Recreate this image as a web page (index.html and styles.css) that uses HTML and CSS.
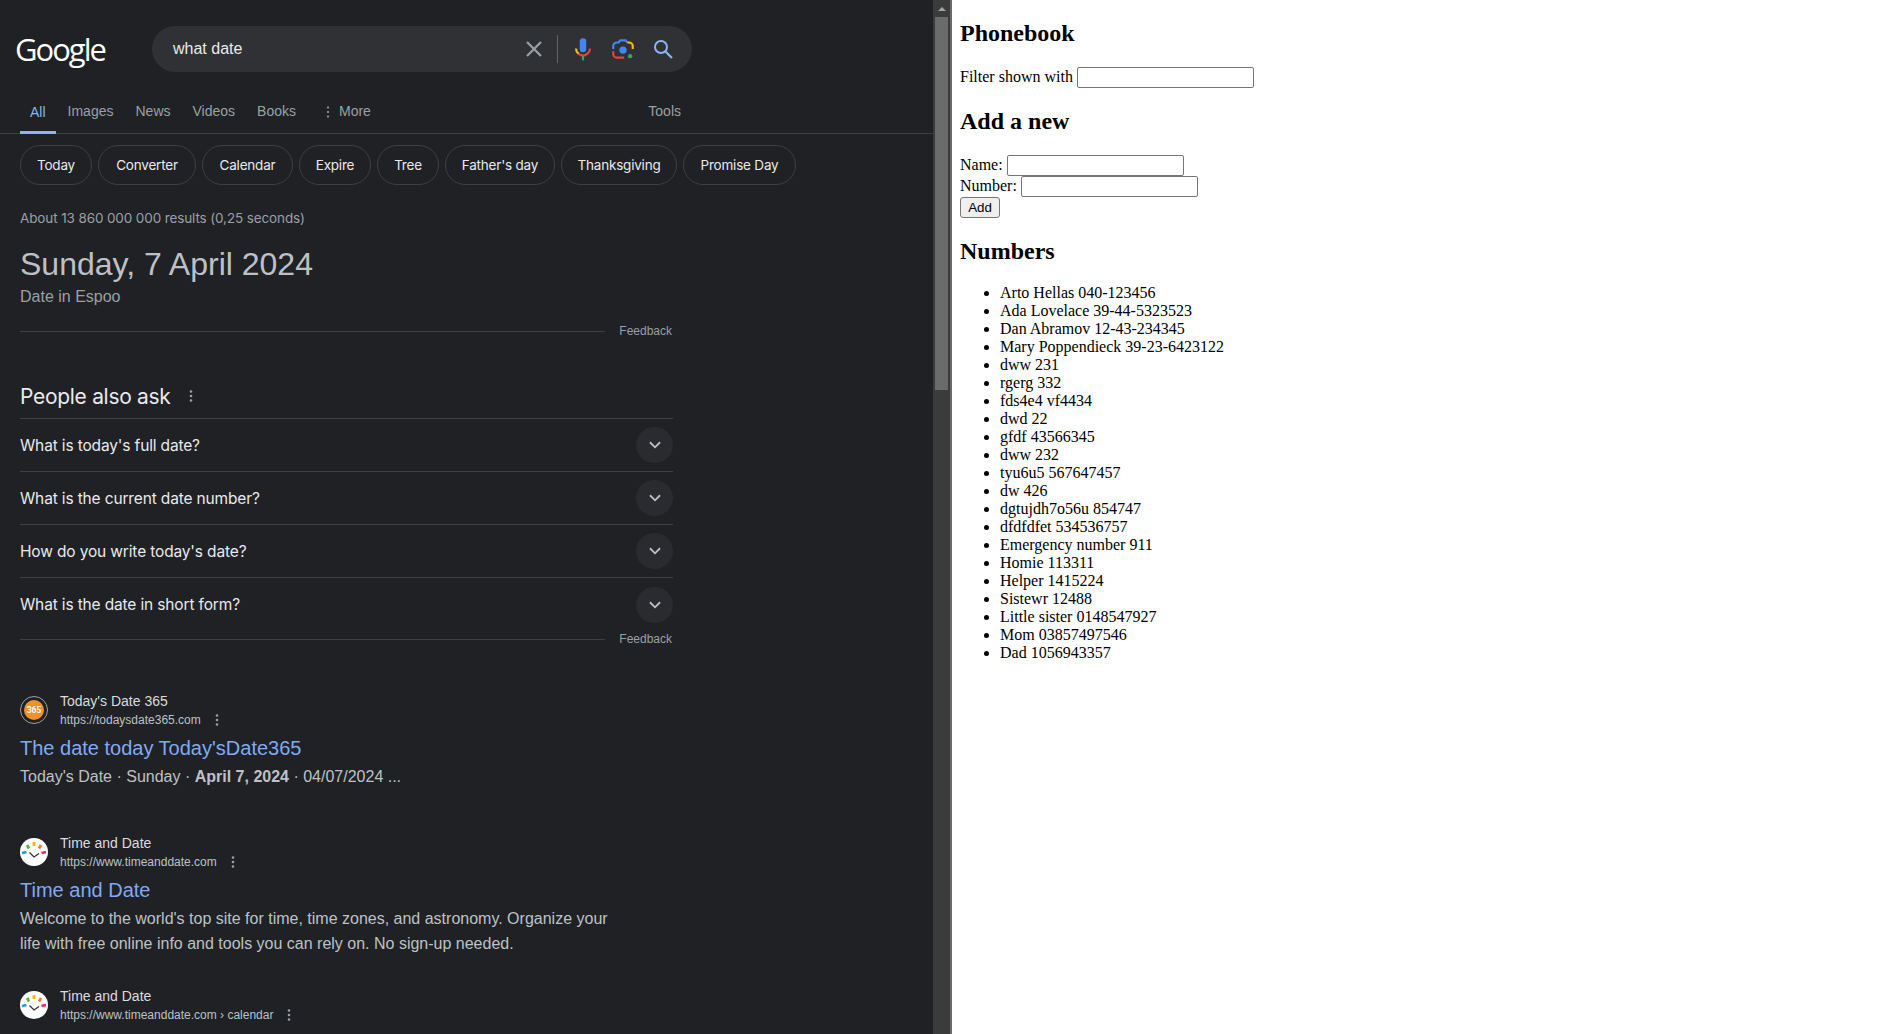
FILE: index.html
```html
<!DOCTYPE html>
<html lang="en">
<head>
<meta charset="utf-8">
<title>what date</title>
<link rel="stylesheet" href="styles.css">
</head>
<body>
<main class="left">
  <div class="serp">
    <header class="top">
      <div class="logo">Google</div>
      <div class="search">
        <span class="query">what date</span>
        <svg class="ic-x" viewBox="0 0 24 24"><path d="M5 5l14 14M19 5L5 19" stroke="#9aa0a6" stroke-width="2.2" fill="none"/></svg>
        <span class="sep"></span>
        <svg class="ic-mic" viewBox="0 0 24 24"><rect x="9" y="2" width="6" height="13" rx="3" fill="#4285f4"/><path d="M5.5 11.5a6.5 6.5 0 0 0 2.5 5" stroke="#fbbc04" stroke-width="2" fill="none"/><path d="M8 16.5a6.5 6.5 0 0 0 8 0 6.5 6.5 0 0 0 2.5-5" stroke="#ea4335" stroke-width="2" fill="none"/><rect x="11" y="18.5" width="2" height="4" fill="#34a853"/></svg>
        <svg class="ic-lens" viewBox="0 0 24 24"><circle cx="12" cy="13" r="3.4" fill="#4285f4"/><circle cx="18.6" cy="18.6" r="2" fill="#34a853"/><path d="M3 12V9.5A3.5 3.5 0 0 1 6.500 6H8l1.500-2h5L16 6" stroke="#4285f4" stroke-width="2" fill="none"/><path d="M16 6h1.500A3.500 3.500 0 0 1 21 9.500V12" stroke="#fbbc04" stroke-width="2" fill="none"/><path d="M3 14v2.500A3.500 3.500 0 0 0 6.500 20H13" stroke="#ea4335" stroke-width="2" fill="none"/></svg>
        <svg class="ic-search" viewBox="0 0 24 24"><circle cx="10" cy="10" r="6" stroke="#8ab4f8" stroke-width="2" fill="none"/><path d="M14.500 14.500L21 21" stroke="#8ab4f8" stroke-width="2.200" fill="none"/></svg>
      </div>
    </header>
    <nav class="tabs">
      <a class="tab active">All</a>
      <a class="tab">Images</a>
      <a class="tab">News</a>
      <a class="tab">Videos</a>
      <a class="tab">Books</a>
      <a class="tab more"><svg class="dots-sm" viewBox="0 0 4 14"><circle cx="2" cy="2.500" r="1.100"/><circle cx="2" cy="7" r="1.100"/><circle cx="2" cy="11.500" r="1.100"/></svg>More</a>
      <a class="tab tools">Tools</a>
    </nav>
    <div class="chips">
      <a class="chip w72">Today</a>
      <a class="chip w98">Converter</a>
      <a class="chip w91">Calendar</a>
      <a class="chip w72">Expire</a>
      <a class="chip w62">Tree</a>
      <a class="chip w110">Father's day</a>
      <a class="chip w116">Thanksgiving</a>
      <a class="chip w113">Promise Day</a>
    </div>
    <p class="stats">About 13 860 000 000 results (0,25 seconds)</p>
    <h1 class="answer">Sunday, 7 April 2024</h1>
    <p class="answer-sub">Date in Espoo</p>
    <div class="feedback first"><span class="rule"></span><span class="fb-text">Feedback</span></div>
    <div class="paa-head"><h2>People also ask</h2><svg class="dots" viewBox="0 0 4 14"><circle cx="2" cy="2.500" r="1.300"/><circle cx="2" cy="7" r="1.300"/><circle cx="2" cy="11.500" r="1.300"/></svg></div>
    <ul class="paa">
      <li><span>What is today's full date?</span><i class="chev"><svg viewBox="0 0 24 24"><path d="M6.500 9l5.500 5.500L17.500 9" stroke="#bdc1c6" stroke-width="2" fill="none"/></svg></i></li>
      <li><span>What is the current date number?</span><i class="chev"><svg viewBox="0 0 24 24"><path d="M6.500 9l5.500 5.500L17.500 9" stroke="#bdc1c6" stroke-width="2" fill="none"/></svg></i></li>
      <li><span>How do you write today's date?</span><i class="chev"><svg viewBox="0 0 24 24"><path d="M6.500 9l5.500 5.500L17.500 9" stroke="#bdc1c6" stroke-width="2" fill="none"/></svg></i></li>
      <li><span>What is the date in short form?</span><i class="chev"><svg viewBox="0 0 24 24"><path d="M6.500 9l5.500 5.500L17.500 9" stroke="#bdc1c6" stroke-width="2" fill="none"/></svg></i></li>
    </ul>
    <div class="feedback second"><span class="rule"></span><span class="fb-text">Feedback</span></div>

    <article class="result r1">
      <div class="site">
        <svg class="fav" viewBox="0 0 28 28"><circle cx="14" cy="14" r="13.500" fill="#202124" stroke="#9aa0a6"/><circle cx="14" cy="14" r="10" fill="#f0912c"/><text x="14" y="17" text-anchor="middle" class="fav-text">365</text></svg>
        <div class="site-text">
          <div class="site-name">Today's Date 365</div>
          <div class="site-url"><span>https://todaysdate365.com</span><svg class="dots-url" viewBox="0 0 4 14"><circle cx="2" cy="2.500" r="1.300"/><circle cx="2" cy="7" r="1.300"/><circle cx="2" cy="11.500" r="1.300"/></svg></div>
        </div>
      </div>
      <a class="title">The date today Today'sDate365</a>
      <p class="snippet">Today's Date · Sunday · <b>April 7, 2024</b> · 04/07/2024 ...</p>
    </article>

    <article class="result r2">
      <div class="site">
        <svg class="fav" viewBox="0 0 28 28"><circle cx="14" cy="14" r="14" fill="#fff"/><path d="M2 15l4.500-1" stroke="#1a9be0" stroke-width="2.800"/><path d="M7 7l2 3.500" stroke="#5cb531" stroke-width="2.800"/><path d="M14 4v4" stroke="#f6b21b" stroke-width="2.800"/><path d="M21 7l-2 3.500" stroke="#f47b20" stroke-width="2.800"/><path d="M26 14l-4.500 1" stroke="#ee2560" stroke-width="2.800"/><path d="M9.500 14.500l4.500 4.500 5-3.500" stroke="#333" stroke-width="1.300" fill="none"/></svg>
        <div class="site-text">
          <div class="site-name">Time and Date</div>
          <div class="site-url"><span>https://www.timeanddate.com</span><svg class="dots-url" viewBox="0 0 4 14"><circle cx="2" cy="2.500" r="1.300"/><circle cx="2" cy="7" r="1.300"/><circle cx="2" cy="11.500" r="1.300"/></svg></div>
        </div>
      </div>
      <a class="title">Time and Date</a>
      <p class="snippet">Welcome to the world's top site for time, time zones, and astronomy. Organize your<br>life with free online info and tools you can rely on. No sign-up needed.</p>
    </article>

    <article class="result r3">
      <div class="site">
        <svg class="fav" viewBox="0 0 28 28"><circle cx="14" cy="14" r="14" fill="#fff"/><path d="M2 15l4.500-1" stroke="#1a9be0" stroke-width="2.800"/><path d="M7 7l2 3.500" stroke="#5cb531" stroke-width="2.800"/><path d="M14 4v4" stroke="#f6b21b" stroke-width="2.800"/><path d="M21 7l-2 3.500" stroke="#f47b20" stroke-width="2.800"/><path d="M26 14l-4.500 1" stroke="#ee2560" stroke-width="2.800"/><path d="M9.500 14.500l4.500 4.500 5-3.500" stroke="#333" stroke-width="1.300" fill="none"/></svg>
        <div class="site-text">
          <div class="site-name">Time and Date</div>
          <div class="site-url"><span>https://www.timeanddate.com › calendar</span><svg class="dots-url" viewBox="0 0 4 14"><circle cx="2" cy="2.500" r="1.300"/><circle cx="2" cy="7" r="1.300"/><circle cx="2" cy="11.500" r="1.300"/></svg></div>
        </div>
      </div>
    </article>
  </div>
  <div class="scrollbar">
    <div class="arrow-box"><span class="arrow"></span></div>
    <div class="thumb"></div>
  </div>
</main>
<section class="phonebook">
  <h2>Phonebook</h2>
  <div>Filter shown with <input class="field"></div>
  <h2>Add a new</h2>
  <form>
    <div>Name: <input class="field"></div>
    <div>Number: <input class="field"></div>
    <div><button type="button" class="add">Add</button></div>
  </form>
  <h2>Numbers</h2>
  <ul>
    <li>Arto Hellas 040-123456</li>
    <li>Ada Lovelace 39-44-5323523</li>
    <li>Dan Abramov 12-43-234345</li>
    <li>Mary Poppendieck 39-23-6423122</li>
    <li>dww 231</li>
    <li>rgerg 332</li>
    <li>fds4e4 vf4434</li>
    <li>dwd 22</li>
    <li>gfdf 43566345</li>
    <li>dww 232</li>
    <li>tyu6u5 567647457</li>
    <li>dw 426</li>
    <li>dgtujdh7o56u 854747</li>
    <li>dfdfdfet 534536757</li>
    <li>Emergency number 911</li>
    <li>Homie 113311</li>
    <li>Helper 1415224</li>
    <li>Sistewr 12488</li>
    <li>Little sister 0148547927</li>
    <li>Mom 03857497546</li>
    <li>Dad 1056943357</li>
  </ul>
</section>
</body>
</html>
```
FILE: styles.css
```css
html, body { margin: 0; height: 100%; }
body { display: flex; height: 1034px; overflow: hidden; background: #fff; }

.left { width: 952px; flex: none; display: flex; background: #202124; border-right: 2px solid #6b6b6b; box-sizing: border-box; height: 1034px; overflow: hidden; }
.serp { width: 933px; flex: none; font-family: "Liberation Sans", Arial, sans-serif; color: #bdc1c6; overflow: hidden; }

.scrollbar { width: 17px; flex: none; background: #3b3b3b; display: flex; flex-direction: column; align-items: center; }
.arrow-box { height: 17px; width: 17px; display: flex; align-items: center; justify-content: center; }
.arrow { width: 0; height: 0; border-left: 4px solid transparent; border-right: 4px solid transparent; border-bottom: 4px solid #a3a3a3; }
.thumb { width: 13px; height: 373px; background: #6b6b6b; }

.top { display: flex; align-items: center; height: 46px; padding-top: 26px; }
.logo { width: 152px; box-sizing: border-box; padding-left: 15px; font-family: "Open Sans", sans-serif; font-size: 31px; letter-spacing: -2px; color: #fff; line-height: 46px; }
.search { width: 540px; height: 46px; border-radius: 23px; background: #303134; display: flex; align-items: center; box-sizing: border-box; padding-left: 21px; }
.query { flex: 1; font-size: 16px; color: #e8eaed; }
.ic-x { width: 24px; height: 24px; margin-right: 13px; position: relative; left: 4px; }
.sep { width: 1px; height: 28px; background: #5f6368; margin-right: 15px; position: relative; left: 2px; }
.ic-mic { width: 26px; height: 26px; margin-right: 14px; position: relative; left: -1px; }
.ic-lens { width: 26px; height: 26px; margin-right: 14px; position: relative; left: -1px; }
.ic-search { width: 24px; height: 24px; margin-right: 17px; }

.tabs { display: flex; height: 62px; box-sizing: border-box; border-bottom: 1px solid #3c4043; padding-left: 20px; }
.tab { font-size: 14px; color: #9aa0a6; padding: 31px 0 0; margin-right: 22px; height: 30px; display: flex; align-items: flex-start; }
.tab.active { color: #8ab4f8; border-bottom: 3px solid #8ab4f8; padding: 32px 10px 0; margin-right: 12px; height: 27px; }
.tab.more { margin-left: 8px; }
.dots-sm { width: 4px; height: 14px; fill: #9aa0a6; margin: 2px 9px 0 0; }
.tab.tools { margin-left: auto; margin-right: 252px; }

.chips { display: flex; gap: 6px; padding: 11px 0 0 20px; height: 40px; }
.chip { box-sizing: border-box; height: 40px; border: 1px solid #3c4043; border-radius: 20px; display: flex; align-items: center; justify-content: center; font-family: "Inter", sans-serif; font-size: 13.500px; letter-spacing: -0.2px; color: #e8eaed; }
.w62 { width: 62px; } .w72 { width: 72px; } .w91 { width: 91px; } .w98 { width: 98px; }
.w110 { width: 110px; } .w113 { width: 113px; } .w116 { width: 116px; }

.stats { margin: 25px 0 0 20px; font-family: "Inter", sans-serif; font-size: 13.500px; letter-spacing: -0.12px; line-height: 16px; color: #9aa0a6; }
.answer { margin: 18px 0 0 20px; font-weight: 400; font-size: 32px; line-height: 40px; color: #bdc1c6; }
.answer-sub { margin: 2px 0 0 20px; font-size: 16px; line-height: 22px; color: #9aa0a6; }

.feedback { display: flex; align-items: center; width: 653px; margin-left: 20px; height: 16px; }
.feedback.first { margin-top: 15px; }
.feedback.second { margin-top: 0; }
.rule { flex: 1; height: 1px; background: #3c4043; margin-right: 14px; }
.fb-text { font-size: 12px; color: #9aa0a6; padding-right: 1px; }

.paa-head { display: flex; align-items: center; margin: 43px 0 0 20px; height: 28px; }
.paa-head h2 { margin: 0; font-family: "Inter", sans-serif; font-weight: 400; font-size: 21px; letter-spacing: -0.3px; color: #e8eaed; }
.dots { width: 4px; height: 14px; fill: #9aa0a6; margin-left: 18px; }

.paa { list-style: none; margin: 8px 0 0 20px; padding: 0; width: 653px; border-top: 1px solid #3c4043; }
.paa li { box-sizing: border-box; height: 53px; display: flex; align-items: center; justify-content: space-between; border-bottom: 1px solid #3c4043; font-family: "Inter", sans-serif; font-size: 15.500px; letter-spacing: -0.15px; color: #e8eaed; }
.paa li:last-child { border-bottom: 0; }
.chev { width: 37px; height: 36px; border-radius: 50%; background: #2a2b2f; display: flex; align-items: center; justify-content: center; }
.chev svg { width: 22px; height: 22px; }

.result { margin-left: 20px; }
.result.r1 { margin-top: 45px; }
.result.r2 { margin-top: 45px; }
.result.r3 { margin-top: 31px; }
.site { display: flex; align-items: center; height: 36px; }
.fav { width: 28px; height: 28px; margin-right: 12px; flex: none; }
.fav-text { font: bold 8.500px "Roboto", sans-serif; fill: #fff; }
.site-name { font-size: 14px; line-height: 20px; color: #dadce0; }
.site-url { font-size: 12px; line-height: 18px; color: #bdc1c6; display: flex; align-items: center; }
.dots-url { width: 4px; height: 14px; fill: #9aa0a6; margin-left: 14px; }
.title { display: block; font-size: 20px; line-height: 26px; color: #7faaf7; margin-top: 7px; }
.snippet { margin: 3px 0 0; font-size: 16px; line-height: 25px; color: #bdc1c6; }

.phonebook { flex: 1; padding: 0 8px; font-family: "Liberation Serif", "Times New Roman", serif; font-size: 16px; color: #000; }
.phonebook h2 { font-size: 24px; font-weight: bold; margin: 19.920px 0; }
.phonebook ul { margin: 16px 0; padding-left: 40px; }
.field { width: 177px; height: 21px; box-sizing: border-box; border: 1px solid #767676; border-radius: 2px; padding: 1px 2px; margin: 0; background: #fff; font: 13.333px "Liberation Sans", Arial, sans-serif; vertical-align: baseline; }
.add { height: 21px; width: 40px; box-sizing: border-box; border: 1px solid #767676; border-radius: 3px; background: #efefef; padding: 1px 6px; font: 13.333px "Liberation Sans", Arial, sans-serif; color: #000; }
```
